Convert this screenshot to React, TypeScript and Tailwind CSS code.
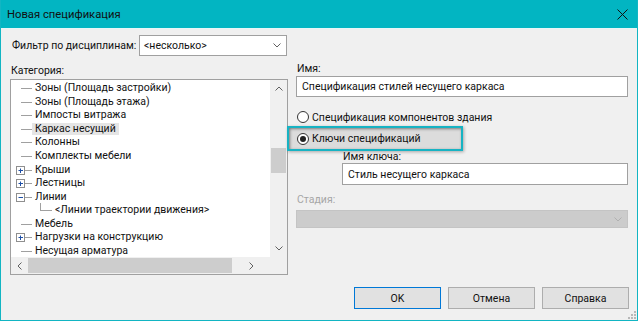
const rows: { text: string; kind: "leaf" | "plus" | "minus" | "child"; selected?: boolean }[] = [
  { text: "Зоны (Площадь застройки)", kind: "leaf" },
  { text: "Зоны (Площадь этажа)", kind: "leaf" },
  { text: "Импосты витража", kind: "leaf" },
  { text: "Каркас несущий", kind: "leaf", selected: true },
  { text: "Колонны", kind: "leaf" },
  { text: "Комплекты мебели", kind: "leaf" },
  { text: "Крыши", kind: "plus" },
  { text: "Лестницы", kind: "plus" },
  { text: "Линии", kind: "minus" },
  { text: "<Линии траектории движения>", kind: "child" },
  { text: "Мебель", kind: "leaf" },
  { text: "Нагрузки на конструкцию", kind: "plus" },
  { text: "Несущая арматура", kind: "leaf" },
];

const Connector = ({ kind }: { kind: string }) => {
  if (kind === "child") {
    return (
      <svg width="41" height="14" className="shrink-0">
        <line x1="29.5" y1="-2" x2="29.5" y2="7.5" stroke="#a0a0a0" />
        <line x1="29" y1="7.5" x2="41" y2="7.5" stroke="#a0a0a0" />
      </svg>
    );
  }
  return (
    <svg width="21" height="14" className="shrink-0">
      {kind === "leaf" && <line x1="10" y1="7.5" x2="21" y2="7.5" stroke="#a0a0a0" />}
      {kind !== "leaf" && (
        <>
          <rect x="5.5" y="3.5" width="8" height="8" fill="#fff" stroke="#8f8f8f" />
          <line x1="7.5" y1="7.5" x2="12" y2="7.5" stroke="#1e4fa6" />
          {kind === "plus" && <line x1="9.5" y1="5.5" x2="9.5" y2="10" stroke="#1e4fa6" />}
          <line x1="14" y1="7.5" x2="21" y2="7.5" stroke="#a0a0a0" />
        </>
      )}
    </svg>
  );
};

const Chevron = ({ color = "#606060" }: { color?: string }) => (
  <svg width="8" height="5" viewBox="0 0 8 5">
    <path d="M0.5 0.5 L4 4 L7.5 0.5" fill="none" stroke={color} />
  </svg>
);

const Radio = ({ checked }: { checked?: boolean }) => (
  <span className="w-[12px] h-[12px] rounded-full border border-[#333] bg-white flex items-center justify-center shrink-0">
    {checked && <span className="w-[6px] h-[6px] rounded-full bg-[#222]" />}
  </span>
);

const Button = ({ label, primary }: { label: string; primary?: boolean }) => (
  <div
    className={
      "w-[87px] h-[22px] flex items-center justify-center bg-[#e1e1e1] border " +
      (primary ? "border-[#0078d7]" : "border-[#adadad]")
    }
  >
    {label}
  </div>
);

export default function App() {
  return (
    <div
      className="w-[638px] h-[321px] bg-[#f0f0f0] border border-t-0 border-[#12b5c3] flex flex-col text-[10.5px] leading-[13px] text-[#111] overflow-hidden whitespace-nowrap"
      style={{ fontFamily: 'Roboto, "Noto Sans", sans-serif' }}
    >
      {/* title bar */}
      <div className="h-[28px] bg-[#02b5c2] flex items-center justify-between pl-[7px] pr-[10px] -mx-px shrink-0">
        <span className="text-[11.25px]">Новая спецификация</span>
        <svg width="11" height="11" viewBox="0 0 11 11">
          <path d="M0.5 0.5 L10.5 10.5 M10.5 0.5 L0.5 10.5" stroke="#111" strokeWidth="1" />
        </svg>
      </div>
      <div className="h-px bg-[#e8f6f7] shrink-0" />

      <div className="flex-1 flex flex-col pl-[9px] pr-[8px]">
        {/* filter */}
        <div className="flex items-center mt-[6px] h-[21px]">
          <span className="w-[129px] pl-[2px]">Фильтр по дисциплинам:</span>
          <div className="w-[148px] h-[21px] bg-white border border-[#a0a0a0] flex items-center justify-between pl-[4px] pr-[5px]">
            <span>&lt;несколько&gt;</span>
            <Chevron />
          </div>
        </div>

        <div className="flex">
          {/* left column */}
          <div className="w-[278px] mt-[8px] flex flex-col">
            <div className="h-[14px] leading-[14px] pl-[1px]">Категория:</div>
            <div className="mt-[1px] h-[196px] bg-white border border-[#a0a0a0] flex flex-col">
              <div className="flex flex-1 min-h-0">
                <div className="flex-1 pt-[1.5px] overflow-hidden">
                  {rows.map((r) => (
                    <div key={r.text} className="h-[13.55px] flex items-center">
                      <Connector kind={r.kind} />
                      <span
                        className={
                          "px-[3px] h-[12px] leading-[12px] " + (r.selected ? "bg-[#e5e5e5]" : "")
                        }
                      >
                        {r.text}
                      </span>
                    </div>
                  ))}
                </div>
                <div className="w-[17px] bg-[#f0f0f0] flex flex-col items-center">
                  <div className="h-[17px] flex items-center justify-center">
                    <svg width="8" height="5" viewBox="0 0 8 5">
                      <path d="M0.5 4.5 L4 1 L7.5 4.5" fill="none" stroke="#606060" />
                    </svg>
                  </div>
                  <div className="mt-[51px] w-[15px] h-[25px] bg-[#cdcdcd]" />
                  <div className="mt-auto h-[17px] flex items-center justify-center">
                    <Chevron />
                  </div>
                </div>
              </div>
              <div className="h-[17px] flex">
                <div className="flex-1 bg-[#f0f0f0] flex items-center">
                  <div className="w-[17px] flex items-center justify-center">
                    <svg width="5" height="8" viewBox="0 0 5 8">
                      <path d="M4.5 0.5 L1 4 L4.5 7.5" fill="none" stroke="#606060" />
                    </svg>
                  </div>
                  <div className="w-[204px] h-[15px] bg-[#cdcdcd]" />
                  <div className="flex-1 flex items-center justify-center">
                    <svg width="5" height="8" viewBox="0 0 5 8">
                      <path d="M0.5 0.5 L4 4 L0.5 7.5" fill="none" stroke="#606060" />
                    </svg>
                  </div>
                </div>
                <div className="w-[17px] bg-[#f0f0f0]" />
              </div>
            </div>
          </div>

          {/* right column */}
          <div className="ml-[8px] w-[332px] mt-[7px] flex flex-col">
            <div className="h-[12px] leading-[12px] pl-[1px]">Имя:</div>
            <div className="mt-[1px] h-[21px] bg-white border border-[#a0a0a0] flex items-center pl-[5px]">
              Спецификация стилей несущего каркаса
            </div>

            <div className="mt-[13px] h-[14px] flex items-center gap-[3px] pl-[1px]">
              <Radio />
              <span>Спецификация компонентов здания</span>
            </div>

            <div className="mt-[2px] -ml-[9px] w-[176px] h-[25px] border-2 border-[#17b3c3] bg-[#dcdcdc] shadow-[inset_1px_1px_3px_rgba(0,0,0,0.45),1px_1px_3px_rgba(0,0,0,0.3)] flex items-center gap-[3px] pl-[8px]">
              <Radio checked />
              <span>Ключи спецификаций</span>
            </div>

            <div className="ml-[46px] h-[12px] leading-[12px] pl-[1px]">Имя ключа:</div>
            <div className="ml-[46px] h-[22px] bg-white border border-[#a0a0a0] flex items-center pl-[5px]">
              Стиль несущего каркаса
            </div>

            <div className="mt-[9px] h-[12px] leading-[12px] pl-[1px] text-[#a6a6a6]">Стадия:</div>
            <div className="mt-[4px] h-[18px] bg-[#cccccc] border border-[#c4c4c4] flex items-center justify-end pr-[5px]">
              <Chevron color="#b0b0b0" />
            </div>
          </div>
        </div>

        {/* buttons */}
        <div className="mt-auto mb-[11px] flex justify-end gap-[7px]">
          <Button label="OK" primary />
          <Button label="Отмена" />
          <Button label="Справка" />
        </div>
      </div>
      <div className="h-0 relative">
        <svg width="8" height="8" className="absolute right-[1px] bottom-[1px]">
          <rect x="6" y="0" width="2" height="2" fill="#b8b8b8" />
          <rect x="3" y="3" width="2" height="2" fill="#b8b8b8" />
          <rect x="6" y="3" width="2" height="2" fill="#b8b8b8" />
          <rect x="0" y="6" width="2" height="2" fill="#b8b8b8" />
          <rect x="3" y="6" width="2" height="2" fill="#b8b8b8" />
          <rect x="6" y="6" width="2" height="2" fill="#b8b8b8" />
        </svg>
      </div>
    </div>
  );
}
